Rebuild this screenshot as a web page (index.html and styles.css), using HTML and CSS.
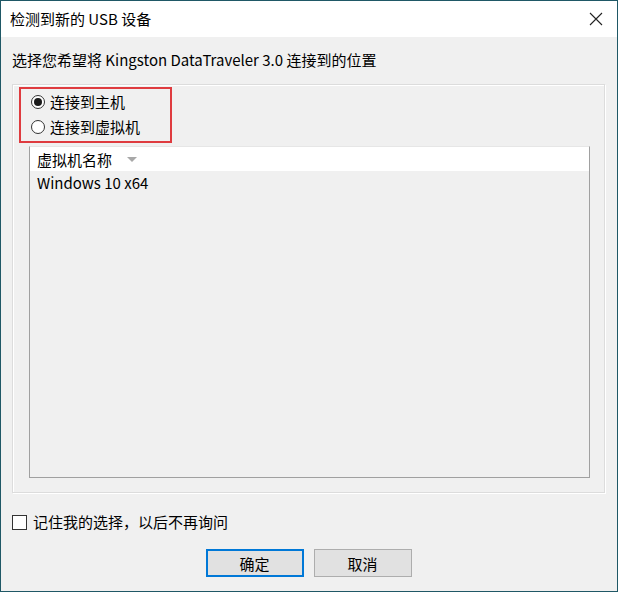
FILE: index.html
```html
<!DOCTYPE html>
<html lang="zh">
<head>
<meta charset="utf-8">
<link rel="stylesheet" href="styles.css">
</head>
<body>
<div class="window">
  <div class="titlebar">
    <span class="title">检测到新的 USB 设备</span>
    <svg class="close" width="14" height="14" viewBox="0 0 14 14"><path d="M1 1 L13 13 M13 1 L1 13" stroke="#222" stroke-width="1.1" fill="none"/></svg>
  </div>
  <div class="content">
    <div class="prompt">选择您希望将 Kingston DataTraveler 3.0 连接到的位置</div>
    <div class="group">
      <div class="choices">
        <label class="radio"><span class="dot checked"></span>连接到主机</label>
        <label class="radio"><span class="dot"></span>连接到虚拟机</label>
      </div>
      <div class="list">
        <div class="list-head"><span>虚拟机名称</span><span class="sort"></span></div>
        <div class="list-row">Windows 10 x64</div>
      </div>
    </div>
    <label class="remember"><span class="box"></span>记住我的选择，以后不再询问</label>
    <div class="buttons">
      <div class="btn primary">确定</div>
      <div class="btn">取消</div>
    </div>
  </div>
</div>
</body>
</html>
```
FILE: styles.css
```css
html, body { margin: 0; padding: 0; }
body {
  font-family: "Noto Sans CJK SC", "Noto Sans", sans-serif;
  font-size: 15px;
  color: #000;
  background: #f0f0f0;
}
.window {
  width: 618px;
  height: 592px;
  box-sizing: border-box;
  border: 1px solid #1f5866;
  display: flex;
  flex-direction: column;
  background: #f0f0f0;
}
.titlebar {
  height: 36px;
  background: #fff;
  display: flex;
  align-items: center;
  justify-content: space-between;
  padding: 0 14px 0 9px;
}
.title { line-height: 20px; }
.close { display: block; }
.content {
  flex: 1;
  padding: 0 12px 0 11px;
  display: flex;
  flex-direction: column;
}
.prompt {
  margin-top: 13px;
  line-height: 20px;
}
.group {
  margin-top: 14px;
  height: 409px;
  box-sizing: border-box;
  border: 1px solid #dcdcdc;
  box-shadow: inset 1px 1px 0 #fff, 1px 1px 0 #fff;
  padding: 2px 14px 0 6px;
  display: flex;
  flex-direction: column;
}
.choices {
  width: 153px;
  height: 56px;
  box-sizing: border-box;
  border: 2px solid #df3b3f;
  padding: 2px 0 0 10px;
  display: flex;
  flex-direction: column;
  gap: 4px;
}
.radio {
  display: flex;
  align-items: center;
  gap: 5px;
  line-height: 21px;
}
.dot {
  width: 12px;
  height: 12px;
  border: 1px solid #333;
  border-radius: 50%;
  background: #fff;
  position: relative;
}
.dot.checked::after {
  content: "";
  position: absolute;
  left: 2px; top: 2px;
  width: 8px; height: 8px;
  border-radius: 50%;
  background: #1a1a1a;
}
.list {
  margin: 3px 0 0 10px;
  height: 332px;
  box-sizing: border-box;
  border: 1px solid #a0a0a0;
  border-top-color: #e6e6e6;
  background: #f0f0f0;
}
.list-head {
  height: 24px;
  background: #fff;
  display: flex;
  align-items: center;
  padding-left: 7px;
  gap: 15px;
}
.sort {
  width: 0; height: 0;
  border-left: 5px solid transparent;
  border-right: 5px solid transparent;
  border-top: 5px solid #a8a8a8;
  margin-top: 1px;
}
.list-row {
  height: 24px;
  line-height: 24px;
  padding-left: 7px;
}
.remember {
  margin-top: 18px;
  display: flex;
  align-items: center;
  gap: 6px;
  line-height: 22px;
}
.box {
  width: 13px; height: 13px;
  border: 1px solid #333;
  background: #fff;
}
.buttons {
  margin-top: 16px;
  display: flex;
  justify-content: center;
  gap: 10px;
}
.btn {
  width: 98px;
  height: 28px;
  box-sizing: border-box;
  border: 1px solid #adadad;
  background: #e1e1e1;
  display: flex;
  align-items: center;
  justify-content: center;
}
.btn.primary {
  border: 2px solid #0078d7;
}
```
